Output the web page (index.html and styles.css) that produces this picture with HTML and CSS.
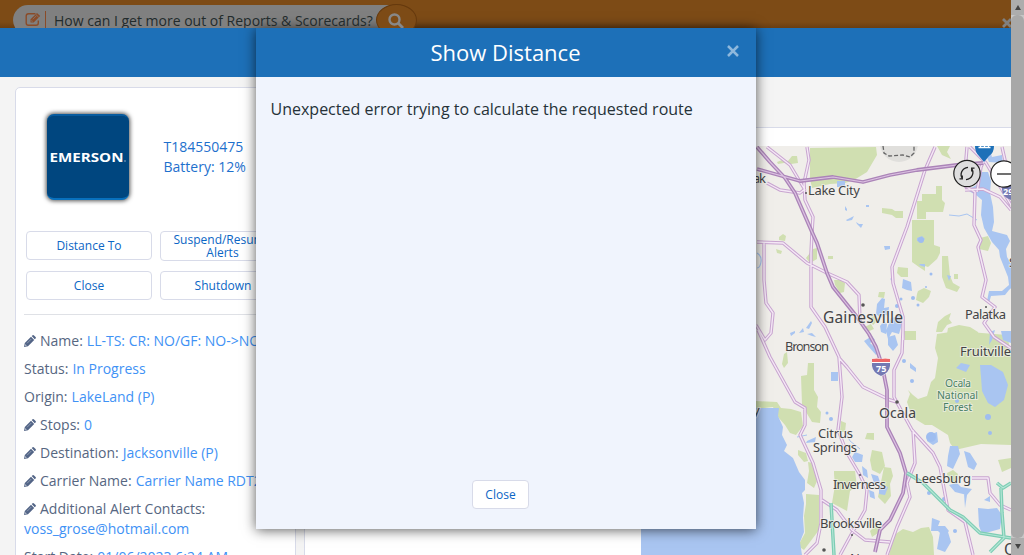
FILE: index.html
```html
<!DOCTYPE html>
<html lang="en">
<head>
<meta charset="utf-8">
<title>Show Distance</title>
<link rel="stylesheet" href="styles.css">
</head>
<body>
<svg class="defs" aria-hidden="true">
  <symbol id="pencil" viewBox="0 0 12 12"><path fill="currentColor" fill-rule="evenodd" d="M0 12l.8-4L7 1.800l3.200 3.200L4 11.200zM7.700 1.100L8.600.3Q9.300-.3 10 .4l1.600 1.600q.6.700 0 1.400l-.9.900zM1.500 9.300l-.3 1.500 1.500-.3z"/><path d="M3 8.300l4.300-4.300" stroke="#b9c1cf" stroke-width=".6"/></symbol>
  <path id="roads" d="M767 147l23 18 15 25M807 147l2 13-5 23 1 17 8 17-1 15-1 21v54l14 20 14 30 3 40-4 33 9 23 13 22 7 15-2 20-13 23-12 22M767 183l13 7 20 3 5-4M757 242l26 1 24 20 20 10 20 9 12 13 1 25M764 243v37l2 23 7 10-2 20-6 7-9-15M758 330l12 27 25 45 10 6v17l-5 10 13 28 8 27v33l-4 20-12 12M839 358l8 9 16 20 27 13 7 2M822 500l15 10 15 20 13 10 25 2M903 330l-1 23-8 17v27l18 33 21 23 7 14 8 43 17 12 8 33M913 430l2 33-8 20 3 14-13 30-10 28M972 478h16l2 15 10 12 11 5M935 147l-10 23-18 57-15 40 1 16 10 34v23M967 147l-2 24 0 15 10 6-1 33 7 15-3 7 8 33-4 17 13 10-11 16 10 14 18 12M965 190l18-1 17 8 11 13M970 147l16 16 25 42M990 147l-9 20-4 25M1002 147l5 22 4 4"/>
  <path id="interstates" d="M757 147l13 15 15 16 10 15 17 39 5 11 10 30 6 14 24 30 12 17 7 13 6 18 5 25v37l13 26 6 20-3 20-13 27-10 10-5 22M757 169l43 12 33-4 30 5 27-7 27-5 40-5 26-2"/>
  <path id="turnpike" d="M831 503l3 52M907 473l16 10 27 27 13 7 17 16 31 5M997 483l6 5 8-5M1001 488l1 25 2 25-14 14"/>
</svg>
<div class="viewport">
  <div class="page">
    <div class="topbar">
      <div class="ask">
        <svg class="ask-icon" viewBox="0 0 17 15"><path d="M10.500 1.700H3.500Q1.200 1.700 1.200 4v7q0 2.300 2.300 2.300h7.500q2.300 0 2.300-2.300V8.500" fill="none" stroke="#8a4b28" stroke-width="1.400"/><path d="M5.500 10.500V7.300L12 .9l3.200 3.100-6.500 6.500z" fill="#8a4b28"/><path d="M6.500 9.500V8l1.500 1.500z" fill="#808080"/><path d="M10.700 2.300l3.100 3.100M7.800 7.300l3.500-3.500" stroke="#808080" stroke-width=".7"/></svg>
        <span class="ask-text">How can I get more out of Reports &amp; Scorecards?</span>
        <span class="ask-go"><svg viewBox="0 0 16 16"><circle cx="6.500" cy="6.500" r="5" fill="none" stroke="#888" stroke-width="2.400"/><path d="M10 10l5 5" stroke="#888" stroke-width="2.800"/></svg></span>
      </div>
      <svg class="dismiss" viewBox="0 0 10 10"><path d="M1 1l8 8M9 1L1 9" stroke="#808080" stroke-width="2.800"/></svg>
    </div>
    <div class="bluebar"></div>
    <div class="content">
      <section class="card asset">
        <div class="identity">
          <div class="logo"><svg viewBox="0 0 82 87"><text x="2.500" y="48" textLength="74" lengthAdjust="spacingAndGlyphs">EMERSON</text><circle cx="78" cy="47" r=".7" fill="#b9cde1"/></svg></div>
          <div class="ident-text">T184550475<br>Battery: 12%</div>
        </div>
        <div class="actions">
          <button>Distance To</button><button class="tall">Suspend/Resume Alerts</button>
          <button>Close</button><button>Shutdown</button>
        </div>
        <div class="details">
          <p><svg class="pen"><use href="#pencil"/></svg>Name: <b>LL-TS: CR: NO/GF: NO-&gt;NO</b></p>
          <p>Status: <b>In Progress</b></p>
          <p>Origin: <b>LakeLand (P)</b></p>
          <p><svg class="pen"><use href="#pencil"/></svg>Stops: <b>0</b></p>
          <p><svg class="pen"><use href="#pencil"/></svg>Destination: <b>Jacksonville (P)</b></p>
          <p><svg class="pen"><use href="#pencil"/></svg>Carrier Name: <b>Carrier Name RDT2</b></p>
          <p><svg class="pen"><use href="#pencil"/></svg>Additional Alert Contacts:<br><b>voss_grose@hotmail.com</b></p>
          <p>Start Date: <b>01/06/2023 6:24 AM</b></p>
        </div>
      </section>
      <section class="card mapcard">
        <svg class="map" viewBox="641 146 370 409">
          <rect x="641" y="146" width="370" height="409" fill="#f0eeea"/>
          <g fill="#d0dfb1">
            <path d="M810 148l66-1 1 8-10 17-13 8-9 3-15 1-18 4-2-9z"/>
            <path d="M777 162l5-2 6 1 4-5 5 0 1 7-7 1-7-1-6 1zM937 146h13l-3 6 4 7-9-4zM922 194h14v-8h6v14l3 3-2 9h-17v7h-9v-18h5zM882 208l10 1 3 2h8v7h-7l-4-3-10-2zM912 220h22v25l6 2v6l-3 6-9 8-3-1v5l-6-4-7-5zM942 256h6l2 20 3 7 7 4-3 5-11-4-4-11zM954 274h4v5h-4zM980 238l8-2 3 7-3 8-9-2zM898 267l10 1v9h-7l-4-4zM918 291l6-3 7 3-2 6-6 6-7-3 1-6zM904 331h12v9h-11zM938 322l7-6 6-3-2 6 3 4-5 2-5 7h-6zM948 328l11-3 11 2 8 5 2 8h-34zM1002 334l9-2v8h-8z"/>
            <path d="M779 237l4-3 3 2-1 5-6-1zM776 249l6 2-1 3-4-1zM806 258l7-9 4-1v11l-7 4zM828 256h5v3h-5zM834 280l6 0 5 3-1 9-4 1-5-8zM879 292l6 0-1 6-6-1zM784 354l3-2 1 11-4 5-2-4zM801 376l6-1 1-12 6 0v27l4 7-1 10 4 5-1 11-8-1-9-15-1-3zM756 401l21 1 4 6 10 1 10 3 2 14-7 9-6-2-5-8-7-8-5-10-17 2zM841 421l5 2-1 9h-5zM867 433h7v7l-9-1zM834 471h21l2 15-7 5-3 20-15-8 3-18-1-11zM798 450l8 3 2 8-4 1-6-7zM808 462l5 1 4 18-3 7-7-5 2-12zM806 494l13 1 0 35-15 20-6-4 7-13-1-17 2-12zM872 450l10 2 3 14-5 8-8-4-2-10z"/>
            <path d="M937 334l20-3 50 4 4 18v92l-30-1-26 6-5-7-2-8-16-10-7 0-13-8-5-15 3-8-2-4 5 5 5 4 9-3 4-14 4-4 3-20-3-10z"/>
            <path d="M903 529l10 3 8-4 8-1 4 10 1 18h-45l5-20zM884 467l7 1 2 8-3 8 1 12-6 8-7-7zM947 473l6-3 5 4-2 10-8-2zM998 460l13-2v10l-9 4zM874 527l8-3-1 7-9 6-2-6zM868 318l6-3 4 5-5 5zM862 328l9-4 3 5-7 3z"/>
          </g>
          <g fill="#a9c5f1">
            <path d="M641 408h138l-1 8 5 11-1 8 5 10-3 6 9 7 6 14 6 8 0 10-3 3 2 10-1 15 1 14-4 10 2 13H641z"/>
            <path d="M980 172h8l3 9-1 12 3 14 1 15-2 9 15 4 3 6-4 8 1 8 7 12 4 13-9 8-4 5-14 1-2 7-2-2 2-10h13l7-6-1-8-8-20-1-7-7-8-8-14-3-13 1-15-6-5-9-5 6-3 5-3zM982 147h7l3 10 10-2 1 8-14-1zM837 181h8v6h-8zM845 206l2 3 0 2-2-1zM846 220l8-4-2 4-5 1zM856 222l3 2 4 0-2 4-4-4zM866 205h3v2h-3zM884 246h6v3l-5 1zM903 279l8 3 1 9-5-1-5-2zM877 304l5-6 3 1-1 9 5-1-1 9-4-2-3 4-5-4zM880 326l4-5 3 3-1 10-5-2zM891 318l9-2 2 8-3 10-7-2-4 7-2-8zM888 337l7-2 3 10-5 6-5-6zM864 341l8-5 3 4-5 3 9 8-3 4-8-9zM917 238l5-2 3 3-3 3-5-1zM920 264l5 0v3l-6-2zM947 275l4 1-2 5z"/>
            <path d="M980 365l11 0 12 7 5 13-4 15-9 7-7-4-6-12-1-14zM956 368l5-5 9 2-4 7zM916 372v-4l-6-5v5zM928 435l9-3 1 10-5 3-6-4zM950 446l8 0 2 8-7 15-6-3 1-10zM964 451l6 2 7 11-3 6-6-3zM949 485l8-2 4 4 11 2-5 6-12-3zM964 494l3 1-2 13zM978 508l10 1 9-1 5 7-2 14-18 5-3-8zM932 518l8 3-2 5 7 0 4 5-5 6-6-6-7 0zM940 532h8l3 10-6 10-8-3zM855 452l8 3-1 7-7 0-3-5zM862 466l5 4 1 8-5-3zM871 474l7 2 2 6-6 1zM879 484l9 3-3 8-6-1zM869 490l5 2 1 7-5-2zM831 372h7v9h-7zM807 441l9-4-1 5-9 1zM790 333l5-2v2l-4 3zM799 333l4-5 1 4zM806 328l5-7 1 2-3 6zM807 334l5-1 4 4-4-1zM984 500l6-4v6zM990 332l5-2-3 10-3 5zM1001 331h10v12l-8-3z"/>
          </g>
          <path d="M757 253q5 3 4 9t-4 6" fill="none" stroke="#a9c5f1" stroke-width="1.200"/>
          <path d="M949 215l10 1 8-2 10 6M797 437l10-2M860 449l-10-8-4-8" fill="none" stroke="#a9c5f1"/>
          <g fill="#9fbdf0"><circle cx="892" cy="279" r="1.500"/><circle cx="913" cy="298" r="2"/><circle cx="918" cy="305" r="1.500"/><circle cx="926" cy="287" r="1"/><circle cx="921" cy="240" r="3"/><circle cx="897" cy="306" r="2"/><circle cx="901" cy="299" r="1.500"/><circle cx="931" cy="274" r="1.500"/><circle cx="957" cy="401" r="2"/><circle cx="988" cy="417" r="3"/><circle cx="990" cy="433" r="2"/><circle cx="827" cy="413" r="1.500"/><circle cx="831" cy="419" r="2"/><circle cx="931" cy="437" r="5"/><circle cx="904" cy="361" r="2"/><circle cx="912" cy="381" r="2"/><circle cx="929" cy="493" r="2"/><circle cx="944" cy="499" r="2"/><circle cx="955" cy="531" r="2"/></g>
          <g fill="none" stroke-linejoin="round">
            <use href="#roads" stroke="#c8a5d0" stroke-width="3.400"/>
            <use href="#roads" stroke="#f5e8f6" stroke-width="1.400"/>
            <use href="#interstates" stroke="#ab84b8" stroke-width="3.800"/>
            <use href="#interstates" stroke="#dcc2e2" stroke-width="1.200"/>
            <use href="#turnpike" stroke="#7dcdb4" stroke-width="3.500"/>
            <use href="#turnpike" stroke="#b5e6d6" stroke-width="1.100"/>
          </g>
          <circle cx="899" cy="143" r="19" fill="#e0dfdc"/><path d="M883 146l1 7 5 3 14-1 7 2 4-4v-7" fill="none" stroke="#666" stroke-width="1.300" stroke-dasharray="4 2"/>
          <g fill="#555"><circle cx="863" cy="305" r="1.800"/><circle cx="897" cy="402" r="1.800"/><circle cx="824" cy="550" r="1.800"/><circle cx="806" cy="193" r="1"/><circle cx="986" cy="307" r="1"/><circle cx="860" cy="475" r="1"/><circle cx="852" cy="535" r="1"/></g>
          <g class="labels">
            <text x="753" y="183" textLength="13">ak</text>
            <text x="808" y="195" textLength="52">Lake City</text>
            <text class="city" x="823" y="323" textLength="80">Gainesville</text>
            <text x="965" y="319" textLength="41">Palatka</text>
            <text x="785" y="351" textLength="44">Bronson</text>
            <text x="960" y="356" textLength="51">Fruitville</text>
            <text class="mid" x="879" y="418" textLength="37">Ocala</text>
            <text x="818" y="438" textLength="35">Citrus</text>
            <text x="813" y="452" textLength="44">Springs</text>
            <text x="833" y="489" textLength="53">Inverness</text>
            <text x="915" y="483" textLength="56">Leesburg</text>
            <text x="820" y="528" textLength="62">Brooksville</text>
            <text x="753" y="415">y</text>
            <text x="1009" y="267">S</text>
            <text class="city" x="1004" y="555">O</text>
            <text x="850" y="563">New</text>
            <g class="forest"><text x="945" y="387" textLength="26">Ocala</text><text x="937" y="399" textLength="41">National</text><text x="943" y="411" textLength="29">Forest</text></g>
          </g>
          <g><path d="M872 359q5-2 9 0 4-2 9 0v7q-1 8-9 10-8-2-9-10z" fill="#fff"/><path d="M872 363h18v3q-1 7-9 10-8-3-9-10z" fill="#7479b2"/><path d="M872 359q5-1 9 0 4-1 9 0v3h-18z" fill="#ed6666"/><text class="shield" x="876" y="371.500">75</text></g>
          <g><path d="M1002 184h9v16q-9-3-9-11z" fill="#7479b2"/><text class="shield" x="1003" y="195">295</text></g>
          <path d="M975 146h19q0 7-5 10l-5 6-5-6q-4-4-4-10z" fill="#1d70b8"/><path d="M978.500 147.500h12M980.500 146v2M984.500 146v1M988.500 146v2" stroke="#fff" stroke-width="1.300"/>
          <circle cx="967" cy="173.500" r="13.200" fill="#dedede" stroke="#222" stroke-width="1.200"/>
          <path d="M962.500 178.500C959.500 174.500 961.500 168 968 167.300M971.500 168.500C974.500 172.500 972.500 179 966 179.700M962.300 175.500v3.300h-2.800M971.700 171.500v-3.300h2.800" fill="none" stroke="#222" stroke-width="1.300"/>
          <circle cx="1004" cy="174" r="13.200" fill="#fff" stroke="#222" stroke-width="1.200"/><path d="M997 174h14" stroke="#222" stroke-width="1.300"/>
        </svg>
      </section>
    </div>
  </div>
  <div class="scrollbar"><span class="up"></span><i></i><span class="down"></span></div>
  <div class="modal">
    <header><h1>Show Distance</h1><svg class="close-x" viewBox="0 0 12 12"><path d="M1 1l10 10M11 1L1 11" stroke="#8eb8dc" stroke-width="2.500"/></svg></header>
    <p class="message">Unexpected error trying to calculate the requested route</p>
    <footer><button>Close</button></footer>
  </div>
</div>
</body>
</html>
```

FILE: styles.css
```css
* { box-sizing: border-box; }
body { margin: 0; font: 14px/20px "Open Sans", "Noto Sans", sans-serif; color: #566681; overflow: hidden; }
p, h1 { margin: 0; }
.defs { position: absolute; width: 0; height: 0; }
.viewport { position: relative; display: flex; width: 1024px; height: 555px; overflow: hidden; }
.page { width: 1011px; height: 555px; display: flex; flex-direction: column; background: #f4f4f4; overflow: hidden; }
.topbar { flex: 0 0 28px; display: flex; justify-content: space-between; background: linear-gradient(#7d4b16 22px, #6a3e12 28px); overflow: hidden; }
.ask { display: flex; align-items: flex-start; margin: 5px 0 0 13px; height: 31px; width: 403px; padding: 0; }
.ask::before { content: ""; width: 388px; height: 30px; margin-right: -388px; border-radius: 15px; background: #808080; flex: none; }
.ask-icon { width: 17px; height: 15px; margin: 7px 0 0 12px; z-index: 1; flex: none; }
.ask-text { z-index: 1; margin: 6px 0 0 3px; padding-left: 8px; color: #222b2c; white-space: nowrap; line-height: 19px; width: 331px; border-left: 1px solid #8a4b28; flex: none; }
.ask-go { z-index: 1; width: 41px; height: 32px; margin-top: -1px; border: 1px solid #65390d; border-radius: 50%; background: #7d4b16; padding: 8px 0 0 11px; flex: none; }
.ask-go svg, .close-x, .dismiss { display: block; }
.ask-go svg { width: 16px; height: 16px; }
.dismiss { width: 10px; height: 10px; margin: 18px -1px 0 0; }
.bluebar { flex: 0 0 49px; background: #1d70b8; }
.content { flex: 1; display: flex; gap: 8px; padding-left: 15px; min-height: 0; }
.card { background: #fff; border: 1px solid #d8dbe9; }
.asset { width: 281px; margin-top: 10px; height: 520px; border-radius: 5px 5px 0 0; padding: 26px 8px 0; flex: none; }
.identity { display: flex; height: 117px; padding-left: 23px; }
.logo { width: 82px; height: 86px; border-radius: 7px; background: #00467f; border-top: 2px solid #075b9f; border-bottom: 2px solid #0870bd; box-shadow: 0 0 4px 1px #555; overflow: hidden; flex: none; }
.logo svg { display: block; margin-top: -2px; width: 82px; height: 87px; }
.logo text { font: 700 12px "Open Sans", sans-serif; fill: #fff; }
.ident-text { margin: 23px 0 0 34.500px; color: #1e70cd; }
button { font: 12px/13px "Open Sans", sans-serif; color: #0b66c5; background: #fff; border: 1px solid #d8dbe9; border-radius: 4px; padding: 0 6px; }
.actions { display: grid; grid-template-columns: 126px 126px; grid-auto-rows: 29px; gap: 11px 8px; padding-left: 2px; }
.actions .tall { height: 30px; padding-right: 7px; }
.details { border-top: 1px solid #dfe1e6; margin-top: 14px; padding-top: 16px; }
.details p { margin-bottom: 8px; white-space: nowrap; }
.details b { font-weight: 400; color: #3f92f5; margin-left: .4px; }
.details br + b { margin-left: 0; }
.pen { width: 12px; height: 12px; margin-right: 4px; vertical-align: -1px; color: #526486; }
.mapcard { flex: 1; margin-top: 50px; border-right: 0; border-bottom: 0; padding: 18px 0 0 336px; min-width: 0; overflow: hidden; }
.map { display: block; width: 370px; height: 409px; }
.labels text { font: 13px "Noto Sans", sans-serif; fill: #434345; paint-order: stroke; stroke: #f3f1edaa; stroke-width: 2px; }
.labels text.city { font-size: 15.500px; }
.labels text.mid { font-size: 14px; }
.labels .forest text { font-size: 10.500px; fill: #4a8166; }
.shield { font: 700 9px "Open Sans", sans-serif; fill: #fff; }
.scrollbar { width: 13px; height: 555px; background: #c6c6c6; display: flex; flex-direction: column; flex: none; }
.scrollbar i { height: 523px; background: #a8a8a8; border-radius: 6px; }
.scrollbar span { height: 15px; background: #adadad; display: flex; align-items: center; justify-content: center; }
.scrollbar .down { height: 17px; }
.scrollbar span::after { content: ""; border: 3.500px solid transparent; }
.scrollbar .up::after { border-bottom: 5px solid #444; border-top: 0; }
.scrollbar .down::after { border-top: 5px solid #444; border-bottom: 0; }
.modal { position: absolute; left: 256px; top: 28px; width: 500px; height: 501px; background: #f0f4fd; box-shadow: 0 1px 12px rgba(0,0,0,.65); display: flex; flex-direction: column; }
.modal header { height: 49px; background: #1d70b8; display: flex; align-items: flex-start; padding: 0 17px 0 28px; }
.modal h1 { flex: 1; font-size: 22px; font-weight: 400; line-height: 49px; color: #fff; text-align: center; }
.close-x { width: 12px; height: 12px; margin-top: 17px; }
.message { padding: 21px 14.500px; font-size: 16px; line-height: 22px; color: #263238; flex: 1; white-space: nowrap; }
.modal footer { text-align: center; height: 49px; padding-right: 11px; }
.modal button { width: 57px; height: 29px; }
```
